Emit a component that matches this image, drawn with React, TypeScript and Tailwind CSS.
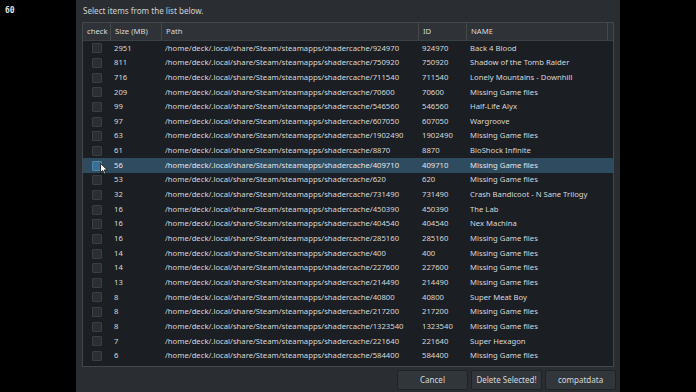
const rows: [number, number, string][] = [
  [2951, 924970, "Back 4 Blood"],
  [811, 750920, "Shadow of the Tomb Raider"],
  [716, 711540, "Lonely Mountains - Downhill"],
  [209, 70600, "Missing Game files"],
  [99, 546560, "Half-Life Alyx"],
  [97, 607050, "Wargroove"],
  [63, 1902490, "Missing Game files"],
  [61, 8870, "BioShock Infinite"],
  [56, 409710, "Missing Game files"],
  [53, 620, "Missing Game files"],
  [32, 731490, "Crash Bandicoot - N Sane Trilogy"],
  [16, 450390, "The Lab"],
  [16, 404540, "Nex Machina"],
  [16, 285160, "Missing Game files"],
  [14, 400, "Missing Game files"],
  [14, 227600, "Missing Game files"],
  [13, 214490, "Missing Game files"],
  [8, 40800, "Super Meat Boy"],
  [8, 217200, "Missing Game files"],
  [8, 1323540, "Missing Game files"],
  [7, 221640, "Super Hexagon"],
  [6, 584400, "Missing Game files"],
];

const SELECTED = 8;

function Cursor() {
  return (
    <svg className="absolute left-[17px] top-[5px]" width="8" height="12" viewBox="0 0 8 12">
      <path d="M0.5 0.5 L0.5 9.5 L2.8 7.4 L4.3 10.8 L5.6 10.2 L4.2 6.9 L7.3 6.9 Z" fill="#ffffff" stroke="#111" strokeWidth="0.8" />
    </svg>
  );
}

export default function App() {
  return (
    <div className="flex w-[696px] h-[392px] bg-black overflow-hidden font-['Noto_Sans',sans-serif] text-[7.7px] text-[#d6d8da]">
      <div className="w-[76px] shrink-0 pl-[5px] pt-[5px]">
        <span className="font-['DejaVu_Sans_Mono',monospace] font-bold text-[8px] text-[#e6e6e6]">60</span>
      </div>

      <div className="w-[544px] shrink-0 bg-[#2a2e32] flex flex-col px-[6px]">
        <div className="h-[22px] flex items-center pl-[1px] pt-[1px] text-[8.1px] text-[#cfd1d3]">
          Select items from the list below.
        </div>

        <div className="w-[532px] h-[345px] border border-[#43484d] bg-[#1b1e22] flex flex-col">
          <div className="flex h-[18px] bg-[#2f3338] border-b border-[#3b4045] text-[#d6d8da]">
            <div className="w-[28px] pl-[4px] flex items-center border-r border-[#44494e]">check</div>
            <div className="w-[51px] pl-[4px] flex items-center border-r border-[#44494e]">Size (MB)</div>
            <div className="w-[257px] pl-[4px] flex items-center border-r border-[#44494e]">Path</div>
            <div className="w-[48px] pl-[4px] flex items-center border-r border-[#44494e]">ID</div>
            <div className="w-[141px] pl-[4px] flex items-center border-r border-[#44494e]">NAME</div>
            <div className="flex-1" />
          </div>

          <div className="flex flex-col">
            {rows.map(([size, id, name], i) => {
              const sel = i === SELECTED;
              return (
                <div
                  key={i}
                  className={
                    sel
                      ? "relative flex h-[14.67px] items-center bg-[#2f4b60] text-[#e3e5e7]"
                      : "relative flex h-[14.67px] items-center"
                  }
                >
                  <div className="w-[28px] flex items-center justify-center">
                    <div
                      className={
                        sel
                          ? "w-[10px] h-[10px] rounded-[1px] border border-[#4f86ab] bg-[#3b6e93]"
                          : "w-[10px] h-[10px] rounded-[1px] border border-[#3a3f44] bg-[#2b2f34]"
                      }
                    />
                  </div>
                  <div className="w-[51px] pl-[3px]">{size}</div>
                  <div className="w-[257px] pl-[3px] whitespace-nowrap">
                    /home/deck/.local/share/Steam/steamapps/shadercache/{id}
                  </div>
                  <div className="w-[48px] pl-[3px]">{id}</div>
                  <div className="w-[141px] pl-[3px] whitespace-nowrap">{name}</div>
                  {sel && <Cursor />}
                </div>
              );
            })}
          </div>
        </div>

        <div className="flex justify-end gap-[3px] mt-[3px] -mr-[2px]">
          <button className="w-[71px] h-[20px] bg-[#31363b] border border-[#1f2226] rounded-[2px] text-[8px] text-[#d6d8da]">Cancel</button>
          <button className="w-[71px] h-[20px] bg-[#31363b] border border-[#1f2226] rounded-[2px] text-[8px] text-[#d6d8da]">Delete Selected!</button>
          <button className="w-[71px] h-[20px] bg-[#31363b] border border-[#1f2226] rounded-[2px] text-[8px] text-[#d6d8da]">compatdata</button>
        </div>
      </div>

      <div className="flex-1 bg-black" />
    </div>
  );
}
